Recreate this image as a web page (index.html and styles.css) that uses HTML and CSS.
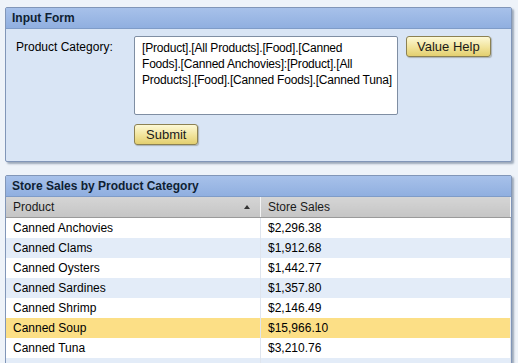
FILE: index.html
```html
<!DOCTYPE html>
<html lang="en">
<head>
    <meta charset="UTF-8">
    <title>Store Sales</title>
    <link rel="stylesheet" href="styles.css">
</head>
<body>

<div class="panel form-panel">
    <div class="panel-header">Input Form</div>
    <div class="panel-body">
        <div class="form-row">
            <label class="field-label">Product Category:</label>
            <div class="field">
                <div class="value-box">[Product].[All Products].[Food].[Canned<br>Foods].[Canned Anchovies]:[Product].[All<br>Products].[Food].[Canned Foods].[Canned Tuna]</div>
                <button class="btn btn-submit">Submit</button>
            </div>
            <button class="btn btn-help">Value Help</button>
        </div>
    </div>
</div>

<div class="panel table-panel">
    <div class="panel-header">Store Sales by Product Category</div>
    <table class="grid">
        <thead>
            <tr>
                <th class="col-product">Product <span class="sort-arrow"></span></th>
                <th>Store Sales</th>
            </tr>
        </thead>
        <tbody>
            <tr><td>Canned Anchovies</td><td>$2,296.38</td></tr>
            <tr class="alt"><td>Canned Clams</td><td>$1,912.68</td></tr>
            <tr><td>Canned Oysters</td><td>$1,442.77</td></tr>
            <tr class="alt"><td>Canned Sardines</td><td>$1,357.80</td></tr>
            <tr><td>Canned Shrimp</td><td>$2,146.49</td></tr>
            <tr class="selected"><td>Canned Soup</td><td>$15,966.10</td></tr>
            <tr><td>Canned Tuna</td><td>$3,210.76</td></tr>
            <tr class="alt"><td>&nbsp;</td><td>&nbsp;</td></tr>
        </tbody>
    </table>
</div>

</body>
</html>
```

FILE: styles.css
```css
/* General Styling */
body {
    margin: 0;
    padding: 7px 6px 0 5px;
    background-color: #eef3f9;
    font-family: "Liberation Sans", Arial, sans-serif;
    font-size: 12px;
    color: #000;
    overflow: hidden;
}
.panel {
    width: 505px;
    border: 1px solid #8196b8;
    border-radius: 2px;
    background-color: #d9e5f5;
    box-shadow: 2px 2px 2px rgba(60,80,110,0.45);
}
.panel-header {
    height: 20px;
    line-height: 20px;
    padding-left: 6px;
    font-weight: bold;
    color: #0f1f33;
    border-bottom: 1px solid #7f9cc8;
    background: linear-gradient(#a7c1ea, #90afe0);
}

/* Input form */
.form-panel {
    height: 153px;
}
.panel-body {
    padding: 7px 10px;
}
.form-row {
    display: flex;
    align-items: flex-start;
}
.field-label {
    width: 118px;
    padding-top: 4px;
}
.field {
    display: flex;
    flex-direction: column;
    align-items: flex-start;
    gap: 8px;
}
.value-box {
    width: 248px;
    height: 63px;
    padding: 3px 7px 11px 7px;
    border: 1px solid #7f8ea3;
    border-radius: 2px;
    background-color: #fff;
    line-height: 16px;
    white-space: nowrap;
    letter-spacing: -0.2px;
    overflow: hidden;
}
.btn {
    height: 21px;
    padding: 0 9px;
    font-family: inherit;
    font-size: 13px;
    color: #1a1a1a;
    border: 1px solid #8c8152;
    border-radius: 3px;
    background: linear-gradient(#fdf9d6, #f1e39a 55%, #e3cf6f);
    box-shadow: 1px 1px 1px rgba(80,80,60,0.35);
}
.btn-submit {
    padding: 0 11px;
    margin-top: 1px;
}
.btn-help {
    margin-left: 8px;
    padding: 0 10px;
}

/* Sales table */
.table-panel {
    margin-top: 13px;
    height: 200px;
    overflow: hidden;
}
.grid {
    width: 505px;
    border-collapse: collapse;
    background-color: #fff;
}
.grid th {
    height: 20px;
    padding: 0 0 0 7px;
    text-align: left;
    font-weight: normal;
    color: #1a1a1a;
    border-right: 1px solid #f4f4f4;
    border-bottom: 1px solid #9a9a9a;
    background: linear-gradient(#d5d5d5, #c5c5c5);
}
.grid th.col-product {
    width: 247px;
    position: relative;
}
.sort-arrow {
    position: absolute;
    right: 10px;
    top: 8px;
    border-left: 3px solid transparent;
    border-right: 3px solid transparent;
    border-bottom: 4px solid #333;
}
.grid td {
    height: 20px;
    padding: 0 0 0 7px;
    border-right: 1px solid #e2e6ec;
}
.grid td:first-child {
    border-right: 1px solid #dfe5ee;
}
.grid tr.alt td {
    background-color: #e3ecf8;
}
.grid tr.selected td {
    background-color: #fcdf86;
}
```
